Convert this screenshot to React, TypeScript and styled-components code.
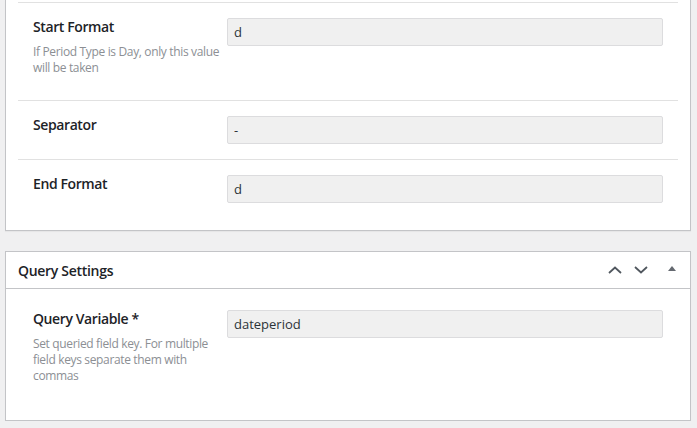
import styled, { createGlobalStyle } from 'styled-components'

const GlobalStyle = createGlobalStyle`
  html, body {
    margin: 0;
    padding: 0;
    background: #f0f0f1;
  }
  body {
    font-family: "Open Sans", "Noto Sans", "Liberation Sans", sans-serif;
    color: #1d2327;
  }
`

type Field = {
  label: string
  description?: string
  value: string
}

const formatFields: Field[] = [
  {
    label: 'Start Format',
    description: 'If Period Type is Day, only this value will be taken',
    value: 'd',
  },
  { label: 'Separator', value: '-' },
  { label: 'End Format', value: 'd' },
]

const queryFields: Field[] = [
  {
    label: 'Query Variable *',
    description: 'Set queried field key. For multiple field keys separate them with commas',
    value: 'dateperiod',
  },
]

const FieldRow = ({ field, divided }: { field: Field; divided: boolean }) => (
  <Row $divided={divided}>
    <LabelCol>
      <Label>{field.label}</Label>
      {field.description && <Description>{field.description}</Description>}
    </LabelCol>
    <Input type="text" defaultValue={field.value} />
  </Row>
)

const ChevronIcon = ({ up }: { up: boolean }) => (
  <svg width="14" height="8" viewBox="0 0 14 8" fill="none">
    <polyline
      points={up ? '1,7 7,1.5 13,7' : '1,1 7,6.5 13,1'}
      stroke="#50575e"
      strokeWidth="1.8"
    />
  </svg>
)

const App = () => (
  <>
    <GlobalStyle />
    <Page>
      <Panel $clipped>
        <Body $top={2}>
          {formatFields.map((f) => (
            <FieldRow key={f.label} field={f} divided />
          ))}
        </Body>
      </Panel>
      <Panel>
        <Header>
          <Title>Query Settings</Title>
          <Actions>
            <IconButton aria-label="Move up">
              <ChevronIcon up />
            </IconButton>
            <IconButton aria-label="Move down">
              <ChevronIcon up={false} />
            </IconButton>
            <ToggleButton aria-label="Toggle panel">
              <Triangle />
            </ToggleButton>
          </Actions>
        </Header>
        <Body $top={6}>
          {queryFields.map((f, i) => (
            <FieldRow key={f.label} field={f} divided={i > 0} />
          ))}
        </Body>
      </Panel>
    </Page>
  </>
)

const Page = styled.div`
  display: flex;
  flex-direction: column;
  gap: 20px;
  padding: 0 6px 0 5px;
`

const Panel = styled.section<{ $clipped?: boolean }>`
  background: #ffffff;
  border: 1px solid #c3c4c7;
  border-top-width: ${(p) => (p.$clipped ? 0 : 1)}px;
  box-shadow: 0 1px 1px rgba(0, 0, 0, 0.04);
`

const Header = styled.div`
  align-items: center;
  border-bottom: 1px solid #c3c4c7;
  display: flex;
  height: 36px;
  justify-content: space-between;
  padding-left: 12px;
`

const Title = styled.h2`
  font-size: 14px;
  font-weight: 600;
  letter-spacing: -0.3px;
  line-height: 1.4;
  margin: 2px 0 0;
`

const Actions = styled.div`
  display: flex;
  height: 100%;
`

const IconButton = styled.button`
  align-items: center;
  background: none;
  border: none;
  cursor: pointer;
  display: flex;
  height: 100%;
  justify-content: center;
  padding: 0;
  width: 26px;
`

const ToggleButton = styled(IconButton)`
  width: 36px;
`

const Triangle = styled.span`
  border-bottom: 5px solid #646970;
  border-left: 4px solid transparent;
  border-right: 4px solid transparent;
  height: 0;
  margin-top: -3px;
  width: 0;
`

const Body = styled.div<{ $top: number }>`
  padding: ${(p) => p.$top}px 12px 12px;
`

const Row = styled.div<{ $divided: boolean }>`
  align-items: start;
  border-top: ${(p) => (p.$divided ? '1px solid #e1e1e1' : 'none')};
  display: grid;
  grid-template-columns: 194px 1fr;
  padding: 15px;
`

const LabelCol = styled.div`
  display: flex;
  flex-direction: column;
`

const Label = styled.label`
  color: #1d2327;
  font-size: 14px;
  font-weight: 600;
  letter-spacing: -0.4px;
  line-height: 18px;
`

const Description = styled.p`
  color: #8c8f94;
  font-size: 12px;
  letter-spacing: -0.35px;
  line-height: 16px;
  margin: 8px 0 9px;
`

const Input = styled.input`
  background: #f0f0f0;
  border: 1px solid #dcdcde;
  border-radius: 2px;
  box-sizing: border-box;
  color: #2c3338;
  font-family: inherit;
  font-size: 13px;
  height: 28px;
  outline: none;
  padding: 0 6px;
  width: 100%;
`

export default App
